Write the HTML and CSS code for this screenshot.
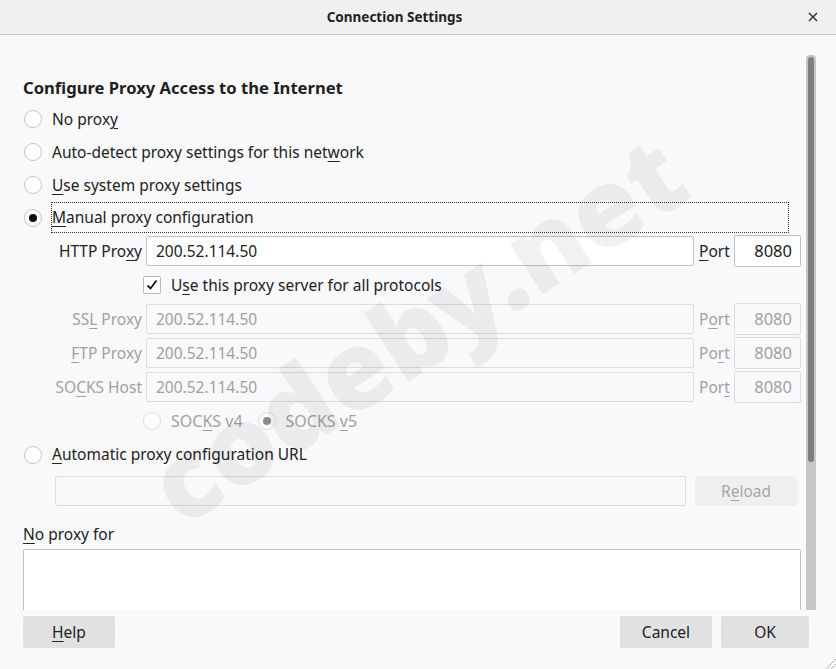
FILE: index.html
```html
<!DOCTYPE html>
<html>
<head>
<meta charset="utf-8">
<title>Connection Settings</title>
<link rel="stylesheet" href="styles.css">
</head>
<body>
<div class="dialog">
  <header class="titlebar">
    <span></span>
    <span class="title">Connection Settings</span>
    <span class="close"><svg width="10" height="10" viewBox="0 0 10 10"><path d="M1 1L9 9M9 1L1 9" stroke="#2b2b2b" stroke-width="1.4" fill="none"/></svg></span>
  </header>
  <div class="body">
    <div class="main">
      <h1 class="heading">Configure Proxy Access to the Internet</h1>
      <div class="radio-row"><span class="radio"></span><span class="label">No prox<u>y</u></span></div>
      <div class="radio-row"><span class="radio"></span><span class="label">Auto-detect proxy settings for this net<u>w</u>ork</span></div>
      <div class="radio-row"><span class="radio"></span><span class="label"><u>U</u>se system proxy settings</span></div>
      <div class="radio-row short"><span class="radio checked"></span><span class="label focus"><u>M</u>anual proxy configuration</span></div>
      <div class="proxy-grid">
        <span class="plabel">HTTP Pro<u>x</u>y</span>
        <div class="input">200.52.114.50</div>
        <span class="port-label"><u>P</u>ort</span>
        <div class="input port">8080</div>

        <div class="check-row"><span class="checkbox"><svg width="16" height="16" viewBox="0 0 16 16"><path d="M3.5 8.5L6.5 11.5L12.5 3.5" stroke="#111" stroke-width="1.8" fill="none"/></svg></span><span>U<u>s</u>e this proxy server for all protocols</span></div>

        <span class="plabel dis">SS<u>L</u> Proxy</span>
        <div class="input dis">200.52.114.50</div>
        <span class="port-label dis">P<u>o</u>rt</span>
        <div class="input port dis">8080</div>

        <span class="plabel dis"><u>F</u>TP Proxy</span>
        <div class="input dis">200.52.114.50</div>
        <span class="port-label dis">Po<u>r</u>t</span>
        <div class="input port dis">8080</div>

        <span class="plabel dis">SO<u>C</u>KS Host</span>
        <div class="input dis">200.52.114.50</div>
        <span class="port-label dis">Por<u>t</u></span>
        <div class="input port dis">8080</div>

        <div class="socks-row dis">
          <span class="radio dis"></span><span class="socks-label">SOC<u>K</u>S v4</span>
          <span class="radio dis checked second"></span><span class="socks-label">SOCKS <u>v</u>5</span>
        </div>
      </div>
      <div class="radio-row tall"><span class="radio"></span><span class="label"><u>A</u>utomatic proxy configuration URL</span></div>
      <div class="url-row">
        <div class="input dis url"></div>
        <span class="reload">R<u>e</u>load</span>
      </div>
      <div class="noproxy-label"><u>N</u>o proxy for</div>
      <div class="textarea"></div>
    </div>
    <div class="scrollbar"><div class="thumb"></div></div>
  </div>
  <footer class="footer">
    <span class="btn help"><u>H</u>elp</span>
    <span class="spacer"></span>
    <span class="btn cancel">Cancel</span>
    <span class="btn ok">OK</span>
  </footer>
  <div class="watermark">codeby.net</div>
  <svg class="grip" width="12" height="12" viewBox="0 0 12 12"><path d="M12 2L2 12M12 7L7 12" stroke="#b5b5b5" stroke-width="1" fill="none"/></svg>
</div>
</body>
</html>
```
FILE: styles.css
```css
* { box-sizing: border-box; }
html, body { margin: 0; padding: 0; }
body {
  width: 836px;
  height: 669px;
  overflow: hidden;
  background: #f9f9fb;
  font-family: "Noto Sans", "DejaVu Sans", sans-serif;
  font-size: 15.5px;
  color: #222;
}
u { text-decoration: underline; text-underline-offset: 3px; text-decoration-thickness: 1px; }
.dialog { position: relative; width: 836px; height: 669px; }

.titlebar {
  height: 35px;
  background: #f0f0f0;
  border-bottom: 1px solid #c8c8c8;
  display: grid;
  grid-template-columns: 1fr auto 1fr;
  align-items: center;
}
.title { font-weight: bold; font-size: 13.5px; color: #222; margin-right: 47px; }
.close { justify-self: end; margin-right: 18px; display: flex; }

.body { height: 575px; display: flex; overflow: hidden; }
.main { width: 778px; margin-left: 23px; flex: none; }
.heading {
  margin: 0 0 2.5px 0;
  padding-top: 41px;
  font-size: 16.6px;
  line-height: 24px;
  font-weight: bold;
  color: #1f1f1f;
}
.radio-row { height: 33px; display: flex; align-items: center; gap: 9px; padding-left: 1px; }
.radio-row.short { height: 32px; }
.radio-row.tall { height: 34px; }
.label { border: 1px solid transparent; line-height: 29px; }
.label.focus { flex: 1; margin-right: 12px; border: 1px dotted #333; height: 31px; }

.radio {
  width: 18px; height: 18px; flex: none;
  border-radius: 50%;
  border: 1px solid #c4c4c4;
  background: #fff;
  display: flex; align-items: center; justify-content: center;
}
.radio.checked::after {
  content: ""; width: 8px; height: 8px; border-radius: 50%; background: #111;
}
.radio.dis { border-color: #dedede; background: #fcfcfc; }
.radio.dis.checked::after { background: #8c8c8c; }

.proxy-grid {
  display: grid;
  grid-template-columns: 119px 1fr 32px 67px;
  column-gap: 4px;
  grid-auto-rows: 34px;
  align-items: center;
}
.plabel { justify-self: end; }
.dis { color: #a0a0a0; }
.input {
  height: 30px;
  border: 1px solid #c2c2c2;
  border-radius: 2px;
  background: #fff;
  padding: 0 9px;
  line-height: 28px;
  color: #222;
}
.input.port { height: 32px; text-align: right; padding-right: 8px; line-height: 30px; font-size: 16.5px; }
.input.dis { background: #f9f9fb; border-color: #dcdcdc; color: #a0a0a0; }
.port-label { padding-left: 1px; }

.check-row { grid-column: 1 / -1; display: flex; align-items: center; gap: 10px; padding-left: 120px; }
.checkbox {
  width: 18px; height: 18px; border: 1px solid #b8b8b8; border-radius: 2px; background: #fff;
  display: flex; align-items: center; justify-content: center;
}
.socks-row { grid-column: 1 / -1; display: flex; align-items: center; gap: 10px; padding-left: 120px; }
.socks-label { font-size: 16px; }
.socks-row .second { margin-left: 5px; }

.url-row { height: 34px; margin-top: 2px; display: flex; align-items: center; gap: 9px; padding-left: 32px; }
.url-row .url { flex: 1; }
.reload {
  width: 102px; height: 30px; margin-right: 4px;
  background: #efeff0; border-radius: 2px; color: #a6a6a6;
  display: flex; align-items: center; justify-content: center;
}
.noproxy-label { margin-top: 15px; line-height: 22px; }
.textarea {
  margin-top: 4px; height: 90px;
  border: 1px solid #c2c2c2; border-radius: 2px; background: #fff;
}

.scrollbar {
  width: 10px; margin-left: 5px; margin-top: 20px; height: 555px;
  background: #c6c6c6; border-radius: 4px 4px 0 0; padding: 2px 2px 0 2px; flex: none;
}
.thumb { height: 405px; background: #7f7f7f; border-radius: 3px; }

.footer {
  height: 59px;
  display: flex;
  align-items: flex-start;
  gap: 9px;
  padding: 6px 27px 0 23px;
}
.btn {
  height: 32px; background: #e1e1e1; border-radius: 2px;
  display: flex; align-items: center; justify-content: center; color: #222;
}
.help { width: 92px; }
.cancel { width: 92px; }
.ok { width: 88px; }
.spacer { flex: 1; }

.watermark {
  position: absolute;
  left: 416px; top: 328px;
  transform: translate(-50%, -50%) rotate(-33deg);
  font-family: "Noto Sans", sans-serif;
  font-weight: 900;
  font-size: 108px;
  color: rgba(0, 0, 0, 0.055);
  white-space: nowrap;
  pointer-events: none;
  line-height: 1;
}
.grip { position: absolute; right: 0; bottom: 0; }
```
